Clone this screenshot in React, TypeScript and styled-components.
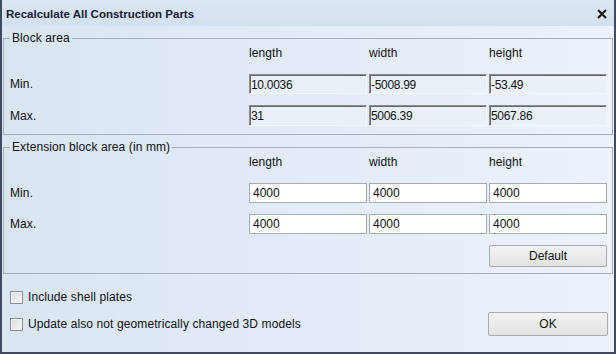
import React from "react";
import styled, { createGlobalStyle } from "styled-components";

interface AreaRow {
  label: string;
  values: string[];
}

const blockRows: AreaRow[] = [
  { label: "Min.", values: ["10.0036", "-5008.99", "-53.49"] },
  { label: "Max.", values: ["31", "5006.39", "5067.86"] },
];

const extensionRows: AreaRow[] = [
  { label: "Min.", values: ["4000", "4000", "4000"] },
  { label: "Max.", values: ["4000", "4000", "4000"] },
];

const columns = ["length", "width", "height"];

const App: React.FC = () => {
  return (
    <>
      <GlobalStyle />
      <StyledWindow>
        <TitleBar>
          <Title>Recalculate All Construction Parts</Title>
          <CloseButton aria-label="Close">
            <svg width="10" height="10" viewBox="0 0 10 10">
              <path d="M1 1 L9 9 M9 1 L1 9" stroke="#111" strokeWidth="2" />
            </svg>
          </CloseButton>
        </TitleBar>
        <Body>
          <Group $padBottom={8}>
            <Legend>Block area</Legend>
            <FieldGrid $lastRow="21px">
              <span />
              {columns.map((c) => (
                <ColHeader key={c}>{c}</ColHeader>
              ))}
              {blockRows.map((row) => (
                <React.Fragment key={row.label}>
                  <RowLabel>{row.label}</RowLabel>
                  {row.values.map((v, i) => (
                    <ValueBox key={i} $readOnly readOnly defaultValue={v} />
                  ))}
                </React.Fragment>
              ))}
            </FieldGrid>
          </Group>

          <Group $padBottom={6} $top={5}>
            <Legend>Extension block area (in mm)</Legend>
            <FieldGrid $lastRow="20px">
              <span />
              {columns.map((c) => (
                <ColHeader key={c}>{c}</ColHeader>
              ))}
              {extensionRows.map((row) => (
                <React.Fragment key={row.label}>
                  <RowLabel>{row.label}</RowLabel>
                  {row.values.map((v, i) => (
                    <ValueBox key={i} defaultValue={v} />
                  ))}
                </React.Fragment>
              ))}
              <DefaultButton>Default</DefaultButton>
            </FieldGrid>
          </Group>

          <Footer>
            <CheckRow>
              <CheckBox />
              Include shell plates
            </CheckRow>
            <CheckRow>
              <CheckBox />
              Update also not geometrically changed 3D models
            </CheckRow>
            <OkButton>OK</OkButton>
          </Footer>
        </Body>
      </StyledWindow>
    </>
  );
};

const GlobalStyle = createGlobalStyle`
  html, body {
    margin: 0;
    padding: 0;
    width: 616px;
    height: 354px;
    overflow: hidden;
  }
  body {
    font-family: "Liberation Sans", Arial, sans-serif;
    font-size: 12px;
    letter-spacing: 0.1px;
    color: #111;
  }
  * {
    box-sizing: border-box;
  }
`;

const StyledWindow = styled.div`
  width: 616px;
  height: 354px;
  display: flex;
  flex-direction: column;
  border: 2px solid #3e4b5f;
  border-top: none;
  background: #d7e3f1;
`;

const TitleBar = styled.div`
  height: 26px;
  flex: none;
  display: flex;
  align-items: center;
  justify-content: space-between;
  padding: 1px 6px 0 4px;
  background: linear-gradient(to bottom, #dbe6f3, #d3e0ef);
`;

const Title = styled.div`
  font-weight: bold;
  font-size: 11.5px;
  letter-spacing: 0;
  color: #152033;
`;

const CloseButton = styled.div`
  width: 12px;
  height: 12px;
  display: flex;
  align-items: center;
  justify-content: center;
`;

const Body = styled.div`
  flex: 1;
  padding: 5px 1px 0;
  background: linear-gradient(to right, #dae5f2, #e4ecf7 55%, #ebf2fb);
`;

const Group = styled.fieldset<{ $padBottom: number; $top?: number }>`
  margin: ${(p) => p.$top ?? 0}px 0 0;
  padding: 0 0 ${(p) => p.$padBottom}px;
  min-width: 0;
  border: 1px solid #a6aeb9;
`;

const Legend = styled.legend`
  margin-left: 6px;
  padding: 0 2px;
  line-height: 14px;
  font-size: 12px;
  color: #111;
`;

const FieldGrid = styled.div<{ $lastRow: string }>`
  display: grid;
  grid-template-columns: 1fr repeat(3, 118px);
  grid-template-rows: 18px 20px ${(p) => p.$lastRow};
  grid-auto-rows: 22px;
  column-gap: 2px;
  row-gap: 11px;
  padding: 0 5px 0 6px;
`;

const ColHeader = styled.div`
  line-height: 16px;
  align-self: start;
`;

const RowLabel = styled.div`
  align-self: center;
`;

const ValueBox = styled.input<{ $readOnly?: boolean }>`
  width: 100%;
  height: 100%;
  margin: 0;
  font-family: "Liberation Sans", Arial, sans-serif;
  font-size: 12px;
  color: #111;
  outline: none;
  ${(p) =>
    p.$readOnly
      ? `
    padding: 1px 0 0 1px;
    letter-spacing: -0.3px;
    background: #eaf0f7;
    border: 1px solid;
    border-color: #8a8a8a #f7f7f7 #f7f7f7 #8a8a8a;
    box-shadow: inset 1px 1px 0 #6b6b6b;
  `
      : `
    padding: 0 0 0 3px;
    background: #fff;
    border: 1px solid #a9abb0;
  `}
`;

const PushButton = styled.button`
  margin: 0;
  padding: 0;
  font-family: "Liberation Sans", Arial, sans-serif;
  font-size: 12px;
  color: #111;
  border: 1px solid #acacac;
  border-radius: 2px;
  background: linear-gradient(to bottom, #f3f3f3, #e3e3e3);
`;

const DefaultButton = styled(PushButton)`
  grid-column: 4;
  height: 22px;
`;

const Footer = styled.div`
  display: grid;
  grid-template-columns: 1fr 120px;
  grid-template-rows: 22px 24px;
  row-gap: 4px;
  padding: 12px 5px 0 7px;
`;

const CheckRow = styled.label`
  grid-column: 1;
  display: flex;
  align-items: center;
  gap: 5px;
`;

const CheckBox = styled.span`
  width: 13px;
  height: 13px;
  flex: none;
  border: 1px solid #8e8f8f;
  background: linear-gradient(135deg, #dcdcdc, #f6f6f6);
  box-shadow: inset 0 0 0 1px #f4f4f4;
`;

const OkButton = styled(PushButton)`
  grid-column: 2;
  grid-row: 2;
`;

export default App;
